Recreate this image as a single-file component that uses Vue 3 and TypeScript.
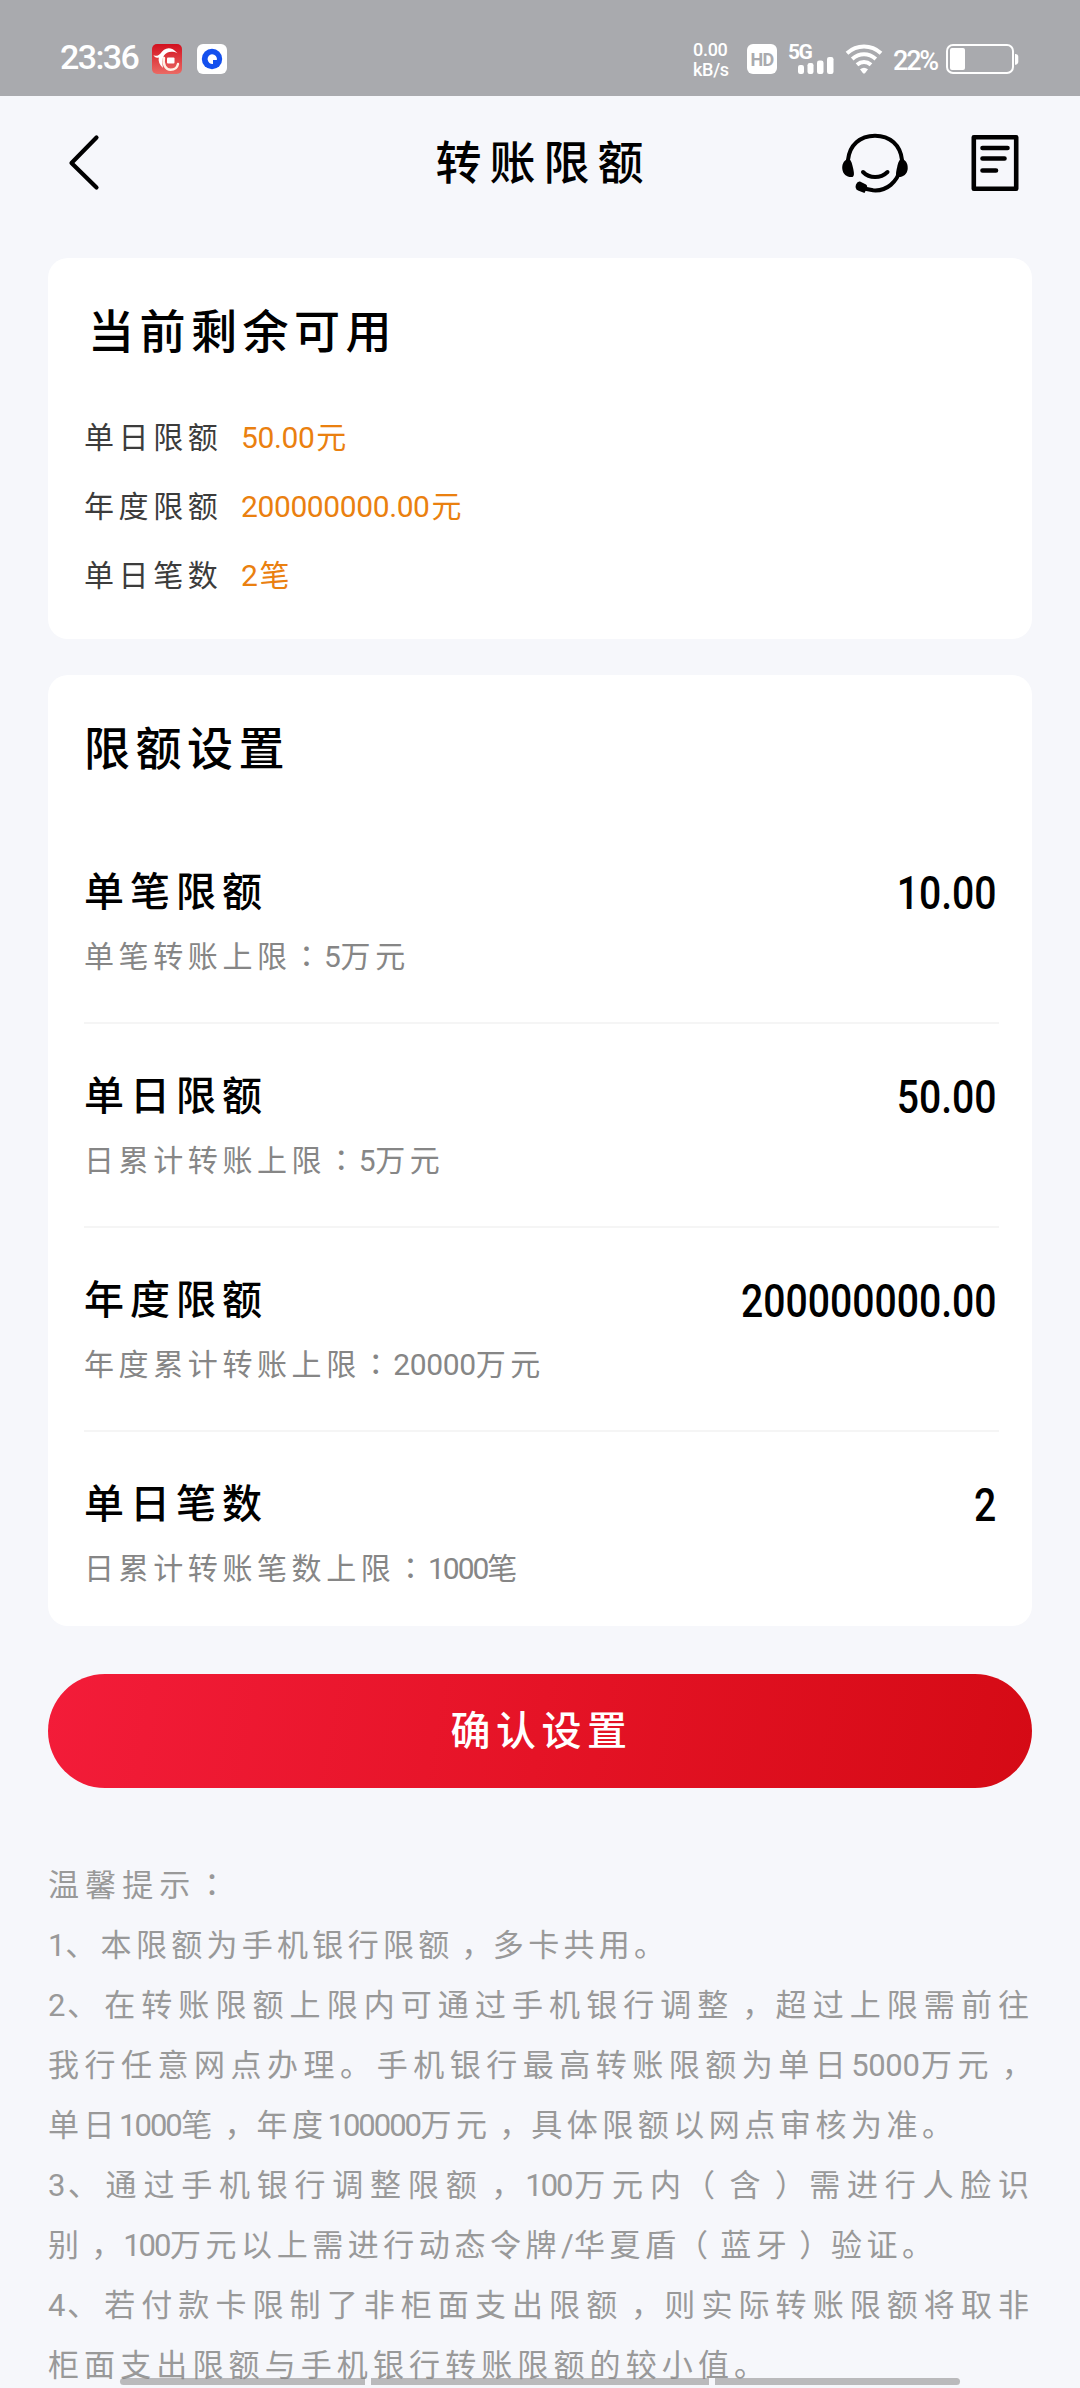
<script setup lang="ts">
import { h, type FunctionalComponent } from 'vue'

interface Remaining { label: string; value: string }
interface Limit { name: string; hint: string; value: string }
interface TipLine { text: string; width: number }

const remaining: Remaining[] = [
  { label: '单日限额', value: '50.00元' },
  { label: '年度限额', value: '200000000.00元' },
  { label: '单日笔数', value: '2笔' },
]

const limits: Limit[] = [
  { name: '单笔限额', hint: '单笔转账上限：5万元', value: '10.00' },
  { name: '单日限额', hint: '日累计转账上限：5万元', value: '50.00' },
  { name: '年度限额', hint: '年度累计转账上限：20000万元', value: '200000000.00' },
  { name: '单日笔数', hint: '日累计转账笔数上限：1000笔', value: '2' },
]

const tips: TipLine[] = [
  { text: '温馨提示：', width: 182 },
  { text: '1、本限额为手机银行限额，多卡共用。', width: 621 },
  { text: '2、在转账限额上限内可通过手机银行调整，超过上限需前往', width: 985 },
  { text: '我行任意网点办理。手机银行最高转账限额为单日5000万元，', width: 985 },
  { text: '单日1000笔，年度100000万元，具体限额以网点审核为准。', width: 909 },
  { text: '3、通过手机银行调整限额，100万元内（含）需进行人脸识', width: 985 },
  { text: '别，100万元以上需进行动态令牌/华夏盾（蓝牙）验证。', width: 889 },
  { text: '4、若付款卡限制了非柜面支出限额，则实际转账限额将取非', width: 985 },
  { text: '柜面支出限额与手机银行转账限额的较小值。', width: 721 },
]

// Digits are set tight, while full-width punctuation is centred in its cell.
const kinds: Record<string, string> = { '：': 'colon', '，': 'comma', '（': 'open', '）': 'close' }
function kindOf(run: string): string {
  if (kinds[run]) return kinds[run]
  if (/^1\d/.test(run)) return 'latin narrow'
  return /^[\x20-\x7e]/.test(run) ? 'latin' : 'han'
}
const Mixed: FunctionalComponent<{ text: string }> = (props) =>
  (props.text.match(/[\x20-\x7e]+|[：，（）]|[^\x20-\x7e：，（）]+/g) ?? []).map((run) =>
    h('span', { class: kindOf(run) }, run),
  )
Mixed.props = ['text']
</script>

<template>
  <div class="screen">
    <div class="status">
      <span class="time">23:36</span>
      <svg class="app red" width="30" height="30" viewBox="0 0 30 30">
        <defs>
          <linearGradient id="appRed" x1="0" y1="0" x2="0" y2="1">
            <stop offset="0" stop-color="#d3101f" />
            <stop offset="1" stop-color="#ea6a64" />
          </linearGradient>
        </defs>
        <rect width="30" height="30" rx="5" fill="url(#appRed)" />
        <path d="M1.500 11C4 12.500 6 12 8.500 9.500C12 4.500 18 1 25.500 9.200C20 6.500 14.500 7.500 12 11.500C10 15 10 19 11 24C7.500 21 6 17 6.800 13.500C4.500 14.300 2.500 13.500 1.500 11Z" fill="#fff" />
        <path d="M12 14C10.500 20.500 14 25.800 18.500 25.800C22.500 25.800 25.300 23.500 26 20" fill="none" stroke="#fff1e4" stroke-width="2.400" stroke-linecap="round" />
        <rect x="15" y="13.500" width="7.500" height="6" rx="1" fill="#fff" />
      </svg>
      <svg class="app" width="30" height="30" viewBox="0 0 30 30">
        <rect width="30" height="30" rx="6" fill="#fff" />
        <circle cx="15" cy="15" r="10.200" fill="#1450ee" />
        <path d="M15 10.200A4.900 4.900 0 1 0 16 20V16H19.900A4.900 4.900 0 0 0 15 10.200Z" fill="#fff" />
      </svg>
      <div class="speed"><span>0.00</span><span>kB/s</span></div>
      <div class="hd">HD</div>
      <div class="signal">
        <span class="net">5G</span>
        <svg class="bars" width="36" height="17" viewBox="0 0 36 17" fill="#fff">
          <rect x="0" y="8" width="6" height="9" rx="2.200" />
          <rect x="9.500" y="6" width="6" height="11" rx="2.200" />
          <rect x="19" y="3.500" width="6.500" height="13.500" rx="2.200" />
          <rect x="29" y="0" width="6.500" height="17" rx="2.200" />
        </svg>
      </div>
      <svg class="wifi" width="38" height="30" viewBox="0 0 38 30">
        <g fill="none" stroke="#fff" stroke-width="4">
          <path d="M2 9.200C12 .400 26 .400 36 9.200" />
          <path d="M7.200 15C14.500 8.800 23.500 8.800 30.800 15" />
          <path d="M12 20.800C16.300 17.200 21.700 17.200 26 20.800" />
        </g>
        <path d="M15 25.300Q19 22.300 23 25.300L20.200 29Q19 30.200 17.800 29Z" fill="#fff" />
      </svg>
      <span class="percent">22%</span>
      <svg class="battery" width="73" height="30" viewBox="0 0 73 30">
        <rect x="1" y="1" width="66" height="28" rx="6" fill="none" stroke="#fff" stroke-width="2" />
        <rect x="4" y="4" width="15" height="22" rx="2" fill="#fff" />
        <path d="M69 10C71 10 72.300 11 72.300 13V17.500C72.300 19.500 71 20.800 69 20.800Z" fill="#fff" />
      </svg>
    </div>

    <header class="header">
      <div class="side">
        <svg width="32" height="58" viewBox="0 0 32 58">
          <path d="M28.500 3.500L3.500 29L28.500 53.500" fill="none" stroke="#000" stroke-width="4.200" stroke-linecap="round" stroke-linejoin="round" />
        </svg>
      </div>
      <h1>转账限额</h1>
      <div class="side actions">
        <svg width="66" height="60" viewBox="0 0 66 60">
          <g fill="none" stroke="#000" stroke-width="4" stroke-linecap="round">
            <path d="M6 27C7.500 12 18 2.700 33 2.700S58.500 12 60 27" />
            <path d="M59 35C55 49 45 58.500 31 57.300L22 55.500" />
            <path d="M21 39C27.500 45.800 38.500 45.800 45.500 39" />
          </g>
          <path d="M6 25.500C1 28 0 32 .300 36C1 41.500 5 44.500 10.500 44C12.500 43 12.300 40 10.800 34C10 30 9 26.500 6 25.500Z" />
          <path d="M60 25.500C65 28 66 32 65.700 36C65 41.500 61 44.500 55.500 44C53.500 43 53.700 40 55.200 34C56 30 57 26.500 60 25.500Z" />
          <path d="M18 48.500L24 51.500Q26 53 24.500 56L22.500 60L16 57.500Q12.500 55.500 14 51.500Q15.500 48 18 48.500Z" />
        </svg>
        <svg width="48" height="58" viewBox="0 0 48 58">
          <g fill="none" stroke="#000" stroke-width="4.600" stroke-linecap="round" stroke-linejoin="round">
            <rect x="2.800" y="3.300" width="42.400" height="51.400" />
            <path d="M11.500 14H36.500M11.500 24.500H33.500M11.500 36.500H25" />
          </g>
        </svg>
      </div>
    </header>

    <main>
      <section class="card remaining">
        <h2>当前剩余可用</h2>
        <div v-for="item in remaining" :key="item.label" class="remain-row">
          <span class="label">{{ item.label }}</span>
          <span class="amount"><Mixed :text="item.value" /></span>
        </div>
      </section>

      <section class="card settings">
        <h2>限额设置</h2>
        <div v-for="item in limits" :key="item.name" class="limit-row">
          <div class="limit-text">
            <div class="limit-name">{{ item.name }}</div>
            <div class="limit-hint"><Mixed :text="item.hint" /></div>
          </div>
          <div class="limit-value">{{ item.value }}</div>
        </div>
      </section>

      <button class="confirm" type="button">确认设置</button>

      <section class="tips">
        <p v-for="line in tips" :key="line.text" :style="{ width: line.width + 'px' }"><Mixed :text="line.text" /></p>
      </section>
    </main>

    <div class="gesture"><i class="first"></i><i class="mid"></i><i class="last"></i></div>
  </div>
</template>

<style>
body {
  margin: 0;
  background: #f6f7fb;
}
</style>

<style scoped>
.screen {
  position: relative;
  width: 1080px;
  height: 2388px;
  overflow: hidden;
  background: #f6f7fb;
  color: #000;
  font-family: Roboto, "Noto Sans CJK SC", sans-serif;
}
.status {
  display: flex;
  align-items: flex-start;
  box-sizing: border-box;
  height: 96px;
  padding: 44px 61px 0 60px;
  background: #a9aaae;
  color: #fff;
}
.time {
  width: 92px;
  font-size: 34px;
  line-height: 27px;
  font-weight: 500;
  letter-spacing: -1.6px;
  white-space: nowrap;
}
.app {
  margin-right: 15px;
}
.speed {
  display: flex;
  flex-direction: column;
  width: 36px;
  margin: -4px 18px 0 auto;
  font-size: 18px;
  line-height: 20px;
  font-weight: 500;
  letter-spacing: -0.3px;
}
.hd {
  width: 30px;
  height: 30px;
  border-radius: 6px;
  background: #fff;
  color: #a9aaae;
  font-size: 18px;
  line-height: 31px;
  font-weight: 700;
  letter-spacing: -0.6px;
  text-align: center;
}
.signal {
  display: flex;
  flex-direction: column;
  width: 46px;
  height: 30px;
  margin-left: 11px;
}
.net {
  height: 13px;
  font-size: 21px;
  line-height: 16px;
  font-weight: 700;
  letter-spacing: -1.5px;
}
.bars {
  margin-left: 10px;
}
.wifi {
  margin-left: 11px;
}
.percent {
  width: 54px;
  margin-left: 10px;
  font-size: 27px;
  line-height: 35px;
  font-weight: 500;
  letter-spacing: -2.2px;
  white-space: nowrap;
}
.battery {
  margin-left: -1px;
}
.header {
  display: flex;
  align-items: center;
  height: 134px;
  padding: 0 61px 0 68px;
}
.side {
  display: flex;
  align-items: center;
  width: 180px;
}
.actions {
  justify-content: flex-end;
  gap: 63px;
}
h1 {
  flex: 1;
  margin: 0;
  font-size: 46px;
  line-height: 60px;
  font-weight: 500;
  letter-spacing: 8px;
  text-align: center;
}
main {
  padding: 28px 48px 0;
}
.card {
  box-sizing: border-box;
  padding: 44px 33px 0 36px;
  border-radius: 20px;
  background: #fff;
}
.remaining {
  height: 381px;
}
.settings {
  height: 951px;
  margin-top: 36px;
}
h2 {
  margin: 0;
  font-size: 46px;
  line-height: 60px;
  font-weight: 500;
  letter-spacing: 5.500px;
}
.remaining h2 {
  margin: 0 0 41px 4px;
}
.settings h2 {
  margin-bottom: 41px;
}
.remain-row {
  display: flex;
  font-size: 30px;
  line-height: 69px;
  letter-spacing: 4.600px;
}
.label {
  width: 157px;
  color: #3c3c3c;
}
.amount {
  color: #ea800f;
}
.limit-row {
  display: flex;
  justify-content: space-between;
  box-sizing: border-box;
  height: 204px;
  padding-top: 45px;
  border-bottom: 2px solid #f5f5f5;
}
.limit-row:last-child {
  border-bottom: 0;
}
.limit-name {
  font-size: 40px;
  line-height: 56px;
  font-weight: 500;
  letter-spacing: 6px;
}
.limit-hint {
  margin-top: 14px;
  color: #868686;
  font-size: 30px;
  line-height: 44px;
  letter-spacing: 4.600px;
}
.limit-value {
  padding: 1px 3px 0 0;
  font-size: 45.500px;
  line-height: 56px;
  font-weight: 500;
  transform: scaleX(0.86);
  transform-origin: right center;
}
.confirm {
  display: block;
  width: 984px;
  height: 114px;
  margin: 48px 0 0;
  padding: 0 0 0 3px;
  border: 0;
  border-radius: 57px;
  background: linear-gradient(100deg, #f31c39, #e51326 50%, #d50a15);
  color: #fff;
  font-family: inherit;
  font-size: 40px;
  line-height: 115px;
  font-weight: 500;
  letter-spacing: 5.500px;
  text-align: center;
}
.tips {
  margin-top: 68px;
  color: #999;
  font-size: 31px;
  line-height: 60px;
  letter-spacing: 4px;
}
.tips p {
  height: 60px;
  margin: 0;
  white-space: nowrap;
  text-align: justify;
  text-align-last: justify;
}
:deep(.latin) {
  letter-spacing: -0.4px;
}
:deep(.narrow) {
  letter-spacing: -2px;
}
.amount :deep(.latin + .han) {
  margin-left: 2px;
}
:deep(.colon) {
  font-family: "Noto Sans CJK TC", sans-serif;
  line-height: 0;
  letter-spacing: 2.500px;
}
:deep(.comma) {
  margin-left: 0.25em;
  margin-right: -0.12em;
}
:deep(.open) {
  margin-left: -0.12em;
  margin-right: 0.25em;
}
:deep(.close) {
  margin-left: 0.25em;
  margin-right: -0.12em;
}
.gesture {
  position: absolute;
  left: 120px;
  bottom: 3px;
  display: flex;
  gap: 6px;
}
.gesture i {
  height: 7px;
  background: rgba(125, 126, 126, 0.5);
}
.first {
  width: 245px;
  border-radius: 4px 0 0 4px;
}
.mid {
  width: 338px;
}
.last {
  width: 245px;
  border-radius: 0 4px 4px 0;
}
</style>
